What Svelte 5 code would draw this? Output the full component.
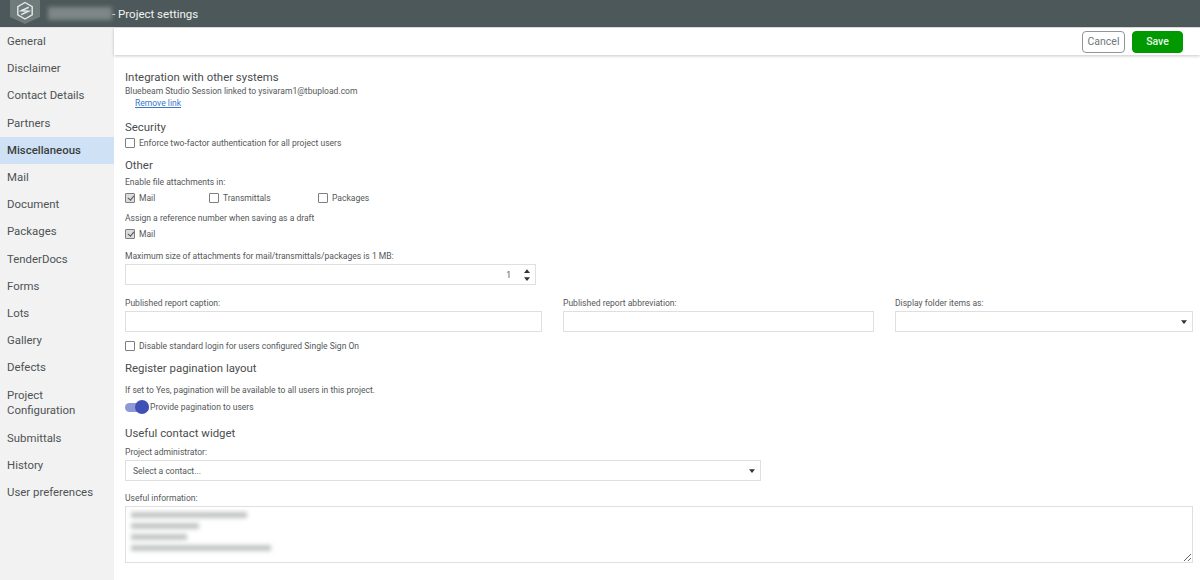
<script>
  const nav = [
    'General', 'Disclaimer', 'Contact Details', 'Partners', 'Miscellaneous', 'Mail', 'Document',
    'Packages', 'TenderDocs', 'Forms', 'Lots', 'Gallery', 'Defects', 'Project Configuration',
    'Submittals', 'History', 'User preferences'
  ];
  const active = 'Miscellaneous';
</script>

<div class="page">
  <header class="topbar">
    <div class="logo">
      <svg viewBox="0 0 30 24" width="30" height="24" aria-hidden="true">
        <path d="M0 0H30V17L15 24L0 17Z" fill="#6f7a7b" />
        <path d="M15 2.5L22.2 6.6V14.9L15 19L7.8 14.9V6.6Z" fill="none" stroke="#e4e8e8" stroke-width="1.4" />
        <path d="M18.8 7.2L11.6 10.6L18.4 11.2L11.2 14.6" fill="none" stroke="#e4e8e8" stroke-width="1.6" />
      </svg>
    </div>
    <div class="blur-name"></div>
    <span class="title">- Project settings</span>
  </header>

  <div class="body">
    <nav class="sidebar">
      {#each nav as item}
        <div class="nav-item" class:active={item === active}>{item}</div>
      {/each}
    </nav>

    <main class="main">
      <div class="toolbar">
        <button class="btn cancel">Cancel</button>
        <button class="btn save">Save</button>
      </div>

      <div class="content">
        <h2 class="h-first">Integration with other systems</h2>
        <p class="t linked">Bluebeam Studio Session linked to ysivaram1@tbupload.com</p>
        <a class="remove" href="#remove">Remove link</a>

        <h2 class="h-security">Security</h2>
        <label class="check"><span class="box"></span>Enforce two-factor authentication for all project users</label>

        <h2 class="h-other">Other</h2>
        <p class="t enable">Enable file attachments in:</p>
        <div class="check-row">
          <label class="check c1"><span class="box on"></span>Mail</label>
          <label class="check c2"><span class="box"></span>Transmittals</label>
          <label class="check"><span class="box"></span>Packages</label>
        </div>
        <p class="t assign">Assign a reference number when saving as a draft</p>
        <label class="check mail2"><span class="box on"></span>Mail</label>

        <p class="t maxsize">Maximum size of attachments for mail/transmittals/packages is 1 MB:</p>
        <div class="field number">
          <span class="num">1</span>
          <span class="spin">
            <svg viewBox="0 0 8 5" width="6" height="4"><path d="M4 0L8 5H0Z" fill="#333" /></svg>
            <svg viewBox="0 0 8 5" width="6" height="4"><path d="M4 5L8 0H0Z" fill="#333" /></svg>
          </span>
        </div>

        <div class="three">
          <div>
            <p class="t">Published report caption:</p>
            <div class="field"></div>
          </div>
          <div>
            <p class="t">Published report abbreviation:</p>
            <div class="field"></div>
          </div>
          <div>
            <p class="t">Display folder items as:</p>
            <div class="field select">
              <svg viewBox="0 0 8 5" width="6" height="4"><path d="M4 5L8 0H0Z" fill="#333" /></svg>
            </div>
          </div>
        </div>

        <label class="check sso"><span class="box"></span>Disable standard login for users configured Single Sign On</label>

        <h2 class="h-register">Register pagination layout</h2>
        <p class="t ifset">If set to Yes, pagination will be available to all users in this project.</p>
        <div class="toggle-row">
          <span class="toggle"><span class="knob"></span></span>
          <span class="t">Provide pagination to users</span>
        </div>

        <h2 class="h-useful">Useful contact widget</h2>
        <p class="t admin">Project administrator:</p>
        <div class="field select contact">
          <span class="t">Select a contact...</span>
          <svg viewBox="0 0 8 5" width="6" height="4"><path d="M4 5L8 0H0Z" fill="#333" /></svg>
        </div>
        <p class="t info">Useful information:</p>
        <div class="area-wrap">
          <textarea class="area" aria-label="Useful information"></textarea>
          <div class="smudges">
            <i class="s1"></i><i class="s2"></i><i class="s3"></i><i class="s4"></i>
          </div>
        </div>
      </div>
    </main>
  </div>
</div>

<style>
  :global(body) {
    margin: 0;
    background: #fff;
    font-family: Roboto, "Liberation Sans", sans-serif;
    color: #4a4a4a;
    overflow: hidden;
  }
  .page {
    width: 1200px;
    height: 580px;
    overflow: hidden;
    display: flex;
    flex-direction: column;
  }
  .topbar {
    height: 27px;
    flex: none;
    background: #4c5859;
    display: flex;
    align-items: center;
    padding-left: 10px;
    border-bottom: 1px solid #dfe3e3;
    position: relative;
  }
  .logo {
    width: 30px;
    height: 24px;
    align-self: flex-start;
  }
  .blur-name {
    width: 64px;
    height: 13px;
    margin-left: 8px;
    background: #7d8788;
    filter: blur(2px);
  }
  .title {
    font-size: 11.5px;
    color: #f2f4f4;
    margin-left: 0;
  }
  .body {
    flex: 1;
    display: flex;
    min-height: 0;
  }
  .sidebar {
    width: 114px;
    flex: none;
    background: #f2f2f2;
    padding-top: 0.3px;
  }
  .nav-item {
    font-size: 11.4px;
    line-height: 15.7px;
    padding: 5.75px 7px;
    color: #4f5354;
  }
  .nav-item.active {
    background: #cfe2f5;
    font-weight: 500;
    color: #3a3d3e;
  }
  .main {
    flex: 1;
    min-width: 0;
    display: flex;
    flex-direction: column;
  }
  .toolbar {
    height: 27px;
    flex: none;
    display: flex;
    justify-content: flex-end;
    align-items: center;
    gap: 7px;
    padding: 0 17px 0 0;
    box-shadow: 0 1px 3px rgba(0, 0, 0, 0.22);
    position: relative;
  }
  .btn {
    height: 22px;
    border-radius: 4px;
    font-family: inherit;
    font-size: 10.5px;
    padding: 0;
  }
  .cancel {
    width: 43px;
    background: #fff;
    border: 1px solid #8f9799;
    color: #6f7779;
  }
  .save {
    width: 51px;
    background: #009a00;
    border: 1px solid #009a00;
    color: #e8f6e8;
    font-weight: 500;
  }
  .content {
    padding: 0 7px 0 11px;
    display: flex;
    flex-direction: column;
    align-items: flex-start;
  }
  h2 {
    margin: 0;
    font-size: 11.4px;
    line-height: 15px;
    font-weight: 400;
    color: #4a4d4e;
  }
  .t, .check {
    font-size: 8.55px;
    line-height: 12px;
    margin: 0;
    color: #54585a;
  }
  .h-first { margin-top: 14.5px; }
  .linked { margin-top: 0.5px; }
  .remove {
    font-size: 8.55px;
    line-height: 12px;
    margin-left: 10px;
    color: #3a78c9;
    text-decoration: underline;
  }
  .h-security { margin-top: 11px; }
  .check {
    display: flex;
    align-items: center;
    height: 12px;
  }
  .box {
    width: 8px;
    height: 8px;
    border: 1px solid #7b7f80;
    border-radius: 1px;
    background: #fff;
    margin-right: 4px;
    flex: none;
    position: relative;
  }
  .box.on {
    background: #dcdcdc;
  }
  .box.on::after {
    content: "";
    position: absolute;
    left: 2.5px;
    top: 0;
    width: 2.5px;
    height: 5px;
    border: solid #555;
    border-width: 0 1.2px 1.2px 0;
    transform: rotate(40deg);
  }
  .h-security + .check { margin-top: 2px; }
  .h-other { margin-top: 8.5px; }
  .enable { margin-top: 3.5px; }
  .check-row {
    display: flex;
    margin-top: 4px;
  }
  .c1 { width: 84px; }
  .c2 { width: 109px; }
  .assign { margin-top: 7.5px; }
  .mail2 { margin-top: 4.5px; }
  .maxsize { margin-top: 10px; }
  .field {
    height: 19px;
    border: 1px solid #dfdfdf;
    background: #fff;
    box-sizing: content-box;
  }
  .number {
    width: 409px;
    margin-top: 2px;
    display: flex;
    align-items: center;
    justify-content: flex-end;
    font-size: 8.55px;
    color: #54585a;
  }
  .num { margin-right: 13px; }
  .spin {
    display: flex;
    flex-direction: column;
    gap: 4px;
    margin-right: 5px;
  }
  .spin svg { display: block; }
  .three {
    display: grid;
    grid-template-columns: 417px 311px 298px;
    column-gap: 21px;
    margin-top: 12px;
    width: 100%;
  }
  .three .field { margin-top: 2px; }
  .select {
    display: flex;
    align-items: center;
    justify-content: flex-end;
  }
  .select svg { margin-right: 5px; }
  .sso { margin-top: 8px; }
  .h-register { margin-top: 9px; }
  .ifset { margin-top: 7.5px; }
  .toggle-row {
    display: flex;
    align-items: center;
    margin-top: 4.5px;
    height: 14px;
  }
  .toggle {
    width: 24px;
    height: 9px;
    border-radius: 5px;
    background: #8f99d8;
    position: relative;
    margin-right: 1px;
  }
  .knob {
    position: absolute;
    right: 0;
    top: -3px;
    width: 14px;
    height: 14px;
    border-radius: 50%;
    background: #3f51b5;
  }
  .h-useful { margin-top: 11.5px; }
  .admin { margin-top: 5.5px; }
  .contact {
    width: 634px;
    margin-top: 2px;
    justify-content: space-between;
  }
  .contact .t { margin-left: 7px; }
  .info { margin-top: 11px; }
  .area-wrap {
    position: relative;
    margin-top: 2px;
    width: 1068px;
    height: 57px;
  }
  .area {
    display: block;
    width: 100%;
    height: 100%;
    box-sizing: border-box;
    border: 1px solid #dfdfdf;
    background: #fff;
    padding: 0;
    outline: none;
  }
  .smudges {
    position: absolute;
    inset: 0;
    pointer-events: none;
  }
  .smudges i {
    position: absolute;
    left: 6px;
    height: 6px;
    background: #c2c4c4;
    filter: blur(2px);
  }
  .s1 { top: 6px; width: 116px; }
  .s2 { top: 17px; width: 68px; }
  .s3 { top: 28px; width: 56px; }
  .s4 { top: 39px; width: 140px; }
</style>
